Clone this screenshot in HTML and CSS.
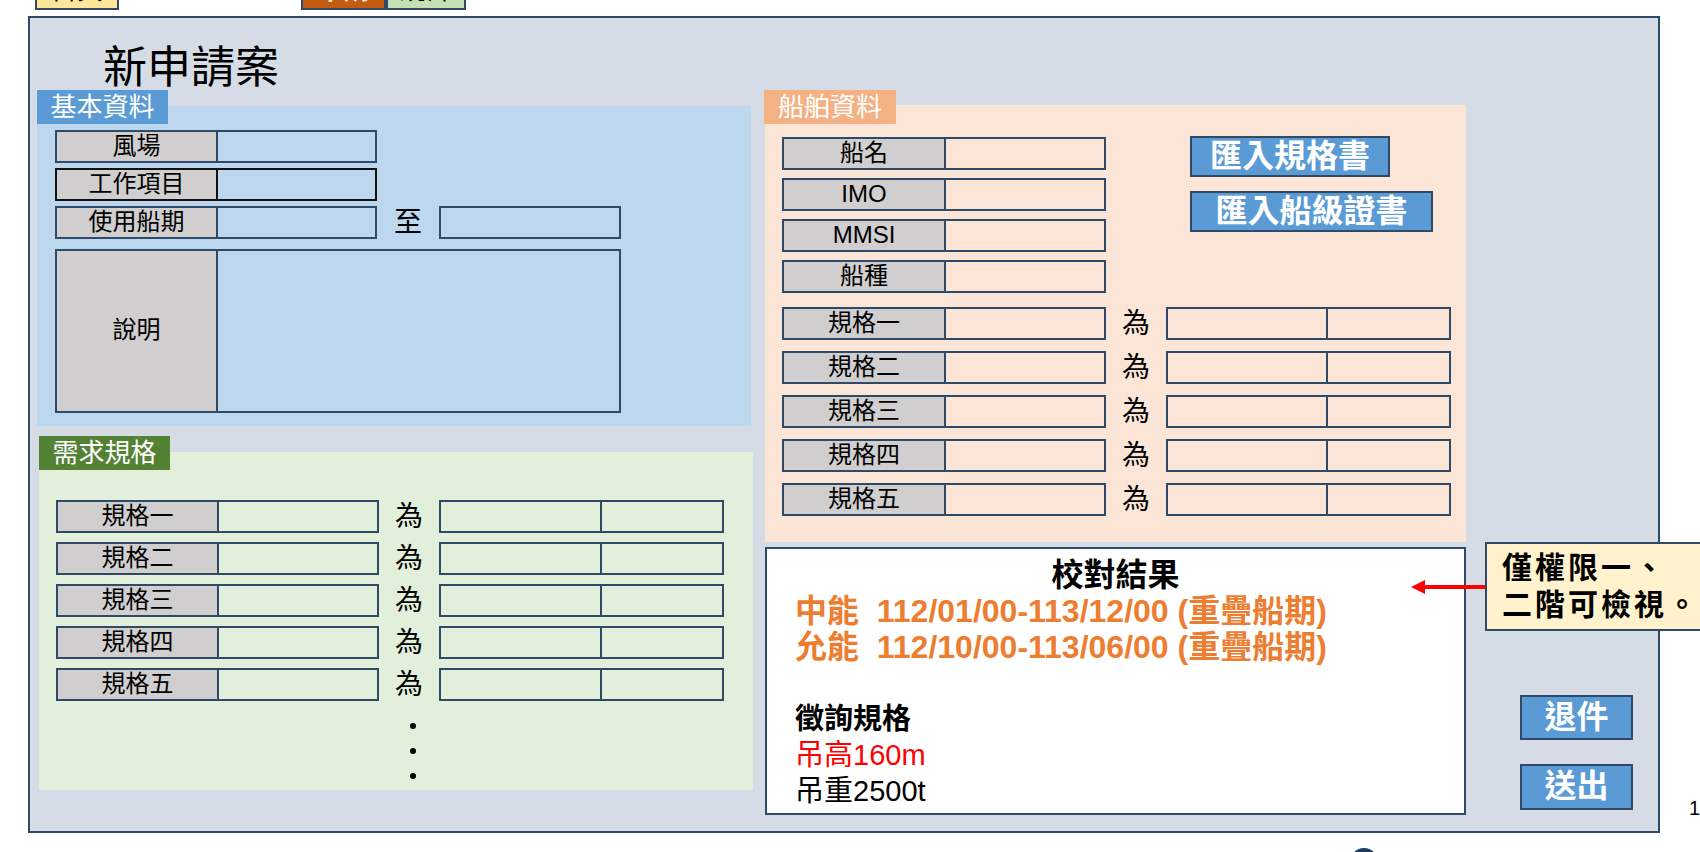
FILE: index.html
```html
<!DOCTYPE html>
<html>
<head>
  <meta charset="utf-8">
  <meta name="viewport" content="width=device-width, initial-scale=1.0">
  <link rel="stylesheet" href="styles.css">
</head>
<body>

<div id="tab_bar">
  <div class="top_tab tab_home">首頁</div>
  <div class="top_tab tab_apply">申請</div>
  <div class="top_tab tab_stats">統計</div>
</div>

<div id="stage">
  <div id="frame">
    <h1 id="page_title">新申請案</h1>

    <div id="columns">

      <div id="left_col">
        <div class="sec_label basic_label">基本資料</div>
        <div class="sec_panel basic_panel">
          <div class="field_row">
            <div class="field_label">風場</div>
            <div class="field_input w161"></div>
          </div>
          <div class="field_row dark_row">
            <div class="field_label">工作項目</div>
            <div class="field_input w161"></div>
          </div>
          <div class="field_row">
            <div class="field_label">使用船期</div>
            <div class="field_input w161"></div>
            <div class="joiner joiner_wide">至</div>
            <div class="field_input w182"></div>
          </div>
          <div class="field_row memo_row">
            <div class="field_label">說明</div>
            <div class="field_input w405"></div>
          </div>
        </div>

        <div class="sec_label need_label">需求規格</div>
        <div class="sec_panel need_panel">
          <div class="spec_list">
            <div class="field_row">
              <div class="field_label">規格一</div>
              <div class="field_input w162"></div>
              <div class="joiner">為</div>
              <div class="field_input w163"></div>
              <div class="field_input tail w122"></div>
            </div>
            <div class="field_row">
              <div class="field_label">規格二</div>
              <div class="field_input w162"></div>
              <div class="joiner">為</div>
              <div class="field_input w163"></div>
              <div class="field_input tail w122"></div>
            </div>
            <div class="field_row">
              <div class="field_label">規格三</div>
              <div class="field_input w162"></div>
              <div class="joiner">為</div>
              <div class="field_input w163"></div>
              <div class="field_input tail w122"></div>
            </div>
            <div class="field_row">
              <div class="field_label">規格四</div>
              <div class="field_input w162"></div>
              <div class="joiner">為</div>
              <div class="field_input w163"></div>
              <div class="field_input tail w122"></div>
            </div>
            <div class="field_row">
              <div class="field_label">規格五</div>
              <div class="field_input w162"></div>
              <div class="joiner">為</div>
              <div class="field_input w163"></div>
              <div class="field_input tail w122"></div>
            </div>
          </div>
          <div class="more_dots">
            <span></span><span></span><span></span>
          </div>
        </div>
      </div>

      <div id="right_col">
        <div class="sec_label ship_label">船舶資料</div>
        <div class="sec_panel ship_panel">
          <div class="ship_top">
            <div class="ship_fields">
              <div class="field_row">
                <div class="field_label">船名</div>
                <div class="field_input w162"></div>
              </div>
              <div class="field_row">
                <div class="field_label">IMO</div>
                <div class="field_input w162"></div>
              </div>
              <div class="field_row">
                <div class="field_label">MMSI</div>
                <div class="field_input w162"></div>
              </div>
              <div class="field_row">
                <div class="field_label">船種</div>
                <div class="field_input w162"></div>
              </div>
            </div>
            <div class="import_col">
              <div class="import_btn import_spec">匯入規格書</div>
              <div class="import_btn import_cert">匯入船級證書</div>
            </div>
          </div>
          <div class="spec_list ship_specs">
            <div class="field_row">
              <div class="field_label">規格一</div>
              <div class="field_input w162"></div>
              <div class="joiner">為</div>
              <div class="field_input w162"></div>
              <div class="field_input tail w123"></div>
            </div>
            <div class="field_row">
              <div class="field_label">規格二</div>
              <div class="field_input w162"></div>
              <div class="joiner">為</div>
              <div class="field_input w162"></div>
              <div class="field_input tail w123"></div>
            </div>
            <div class="field_row">
              <div class="field_label">規格三</div>
              <div class="field_input w162"></div>
              <div class="joiner">為</div>
              <div class="field_input w162"></div>
              <div class="field_input tail w123"></div>
            </div>
            <div class="field_row">
              <div class="field_label">規格四</div>
              <div class="field_input w162"></div>
              <div class="joiner">為</div>
              <div class="field_input w162"></div>
              <div class="field_input tail w123"></div>
            </div>
            <div class="field_row">
              <div class="field_label">規格五</div>
              <div class="field_input w162"></div>
              <div class="joiner">為</div>
              <div class="field_input w162"></div>
              <div class="field_input tail w123"></div>
            </div>
          </div>
        </div>

        <div id="result_box">
          <div class="result_title">校對結果</div>
          <div class="result_line overlap_line">中能&nbsp; 112/01/00-113/12/00 (重疊船期)</div>
          <div class="result_line overlap_line">允能&nbsp; 112/10/00-113/06/00 (重疊船期)</div>
          <div class="result_line"></div>
          <div class="result_line ask_title">徵詢規格</div>
          <div class="result_line ask_red">吊高160m</div>
          <div class="result_line">吊重2500t</div>
        </div>
      </div>

      <div id="btn_col">
        <div class="action_btn">退件</div>
        <div class="action_btn send_btn">送出</div>
      </div>

    </div>

    <svg class="note_arrow" width="76" height="16" viewBox="0 0 76 16">
      <line x1="12" y1="8" x2="76" y2="8" stroke="#ff0000" stroke-width="4"/>
      <polygon points="0,8 14,1 14,15" fill="#ff0000"/>
    </svg>

    <div id="perm_note">
      <div>僅權限一、</div>
      <div>二階可檢視。</div>
    </div>
  </div>

  <div id="slide_num">11</div>
</div>

<div id="bottom_row">
  <div class="round_badge"></div>
</div>

</body>
</html>
```

FILE: styles.css
```css
* {
  box-sizing: border-box;
}

html, body {
  margin: 0;
}

body {
  width: 1700px;
  height: 852px;
  overflow: hidden;
  background: #ffffff;
  color: #000000;
  font-family: "Liberation Sans", "Noto Sans CJK TC", sans-serif;
}

/* top tabs, mostly cut off above the window */
#tab_bar {
  display: flex;
  height: 16px;
}

.top_tab {
  height: 40px;
  margin-top: -30px;
  border: 2px solid #2f4a66;
  font-size: 26px;
  line-height: 36px;
  text-align: center;
}

.tab_home {
  margin-left: 35px;
  width: 84px;
  background: #ffe699;
}

.tab_apply {
  margin-left: 182px;
  width: 85px;
  background: #c55a11;
  color: #ffffff;
  font-weight: bold;
}

.tab_stats {
  width: 80px;
  background: #c5e0b4;
}

/* main frame */
#stage {
  display: flex;
  align-items: flex-end;
  width: 1760px;
}

#frame {
  position: relative;
  flex-shrink: 0;
  margin-left: 28px;
  width: 1632px;
  height: 817px;
  border: 2px solid #2f4a66;
  background: #d6dce5;
  padding-left: 7px;
}

#page_title {
  margin: 28px 0 0 66px;
  font-size: 44px;
  line-height: 44px;
  font-weight: normal;
}

#columns {
  display: flex;
}

#left_col {
  width: 716px;
}

#right_col {
  width: 701px;
  margin-left: 12px;
}

#btn_col {
  width: 113px;
  margin-left: 54px;
  display: flex;
  flex-direction: column;
  justify-content: flex-end;
  gap: 24px;
  padding-bottom: 5px;
}

/* section tabs + panels */
.sec_label {
  position: relative;
  z-index: 1;
  width: 131px;
  height: 34px;
  color: #ffffff;
  font-size: 26px;
  line-height: 34px;
  text-align: center;
}

.sec_panel {
  margin-top: -18px;
}

.basic_label {
  background: #5b9bd5;
}

.basic_panel {
  height: 320px;
  width: 714px;
  background: #bdd7ee;
  padding: 24px 0 0 18px;
  display: flex;
  flex-direction: column;
  gap: 5px;
}

.need_label {
  margin-top: 10px;
  margin-left: 2px;
  background: #548235;
}

.need_panel {
  margin-left: 2px;
  width: 714px;
  height: 338px;
  background: #e2efda;
  padding: 48px 0 0 17px;
}

.ship_label {
  width: 132px;
  margin-left: -1px;
  background: #f4b183;
}

.ship_panel {
  margin-top: -19px;
  height: 437px;
  background: #fbe5d6;
  padding: 32px 0 0 17px;
}

/* form rows */
.field_row {
  display: flex;
  align-items: center;
  height: 33px;
}

.field_label {
  width: 161px;
  height: 100%;
  background: #d0cece;
  border: 2px solid #2f4a66;
  border-right: none;
  font-size: 24px;
  line-height: 28px;
  text-align: center;
}

.field_input {
  height: 100%;
  border: 2px solid #2f4a66;
}

.field_input.tail {
  border-left: none;
}

.dark_row .field_label,
.dark_row .field_input {
  border-color: #111111;
}

.memo_row {
  height: 164px;
  margin-top: 5px;
}

.memo_row .field_label {
  line-height: 158px;
}

.w122 { width: 122px; }
.w123 { width: 123px; }
.w161 { width: 161px; }
.w162 { width: 162px; }
.w163 { width: 163px; }
.w182 { width: 182px; }
.w405 { width: 405px; }

.joiner {
  width: 60px;
  font-size: 28px;
  line-height: 33px;
  text-align: center;
}

.joiner_wide {
  width: 62px;
}

.spec_list {
  display: flex;
  flex-direction: column;
  gap: 9px;
}

.more_dots {
  width: 6px;
  margin-left: 354px;
  margin-top: 22px;
  display: flex;
  flex-direction: column;
  gap: 19px;
}

.more_dots span {
  display: block;
  width: 6px;
  height: 6px;
  border-radius: 50%;
  background: #000000;
}

/* ship info */
.ship_top {
  display: flex;
}

.ship_fields {
  display: flex;
  flex-direction: column;
  gap: 8px;
}

.ship_fields .field_label {
  width: 162px;
}

.ship_specs {
  margin-top: 14px;
  gap: 11px;
}

.ship_specs .field_label {
  width: 162px;
}

.import_col {
  margin-left: 84px;
  margin-top: -1px;
  display: flex;
  flex-direction: column;
  gap: 14px;
}

.import_btn {
  height: 41px;
  background: #5b9bd5;
  border: 2px solid #2f4a66;
  color: #ffffff;
  font-size: 32px;
  font-weight: bold;
  line-height: 36px;
  text-align: center;
}

.import_spec {
  width: 200px;
}

.import_cert {
  width: 243px;
}

/* check result */
#result_box {
  margin-top: 5px;
  height: 268px;
  background: #ffffff;
  border: 2px solid #2f4a66;
  padding: 8px 28px 0;
}

.result_title {
  font-size: 32px;
  font-weight: bold;
  line-height: 36px;
  text-align: center;
}

.result_line {
  height: 36px;
  font-size: 29px;
  line-height: 36px;
  white-space: nowrap;
}

.overlap_line {
  color: #ed7d31;
  font-weight: bold;
  font-size: 32px;
}

.ask_title {
  font-weight: bold;
}

.ask_red {
  color: #ff0000;
}

/* side buttons */
.action_btn {
  height: 45px;
  background: #5b9bd5;
  border: 2px solid #2f4a66;
  color: #ffffff;
  font-size: 32px;
  font-weight: bold;
  line-height: 40px;
  text-align: center;
}

.send_btn {
  height: 46px;
}

/* permission note over the frame edge */
.note_arrow {
  position: absolute;
  left: 1381px;
  top: 561px;
}

#perm_note {
  position: absolute;
  left: 1455px;
  top: 524px;
  width: 240px;
  height: 89px;
  background: #fff2cc;
  border: 2px solid #2f4a66;
  padding: 5px 0 0 15px;
  font-size: 30px;
  font-weight: bold;
  line-height: 37px;
  letter-spacing: 3px;
  white-space: nowrap;
}

#slide_num {
  flex-shrink: 0;
  margin-left: 29px;
  margin-bottom: 13px;
  font-size: 20px;
  line-height: 24px;
  white-space: nowrap;
}

#bottom_row {
  padding-top: 15px;
  padding-left: 1350px;
}

.round_badge {
  width: 28px;
  height: 28px;
  border-radius: 50%;
  background: #1f3864;
}
```
